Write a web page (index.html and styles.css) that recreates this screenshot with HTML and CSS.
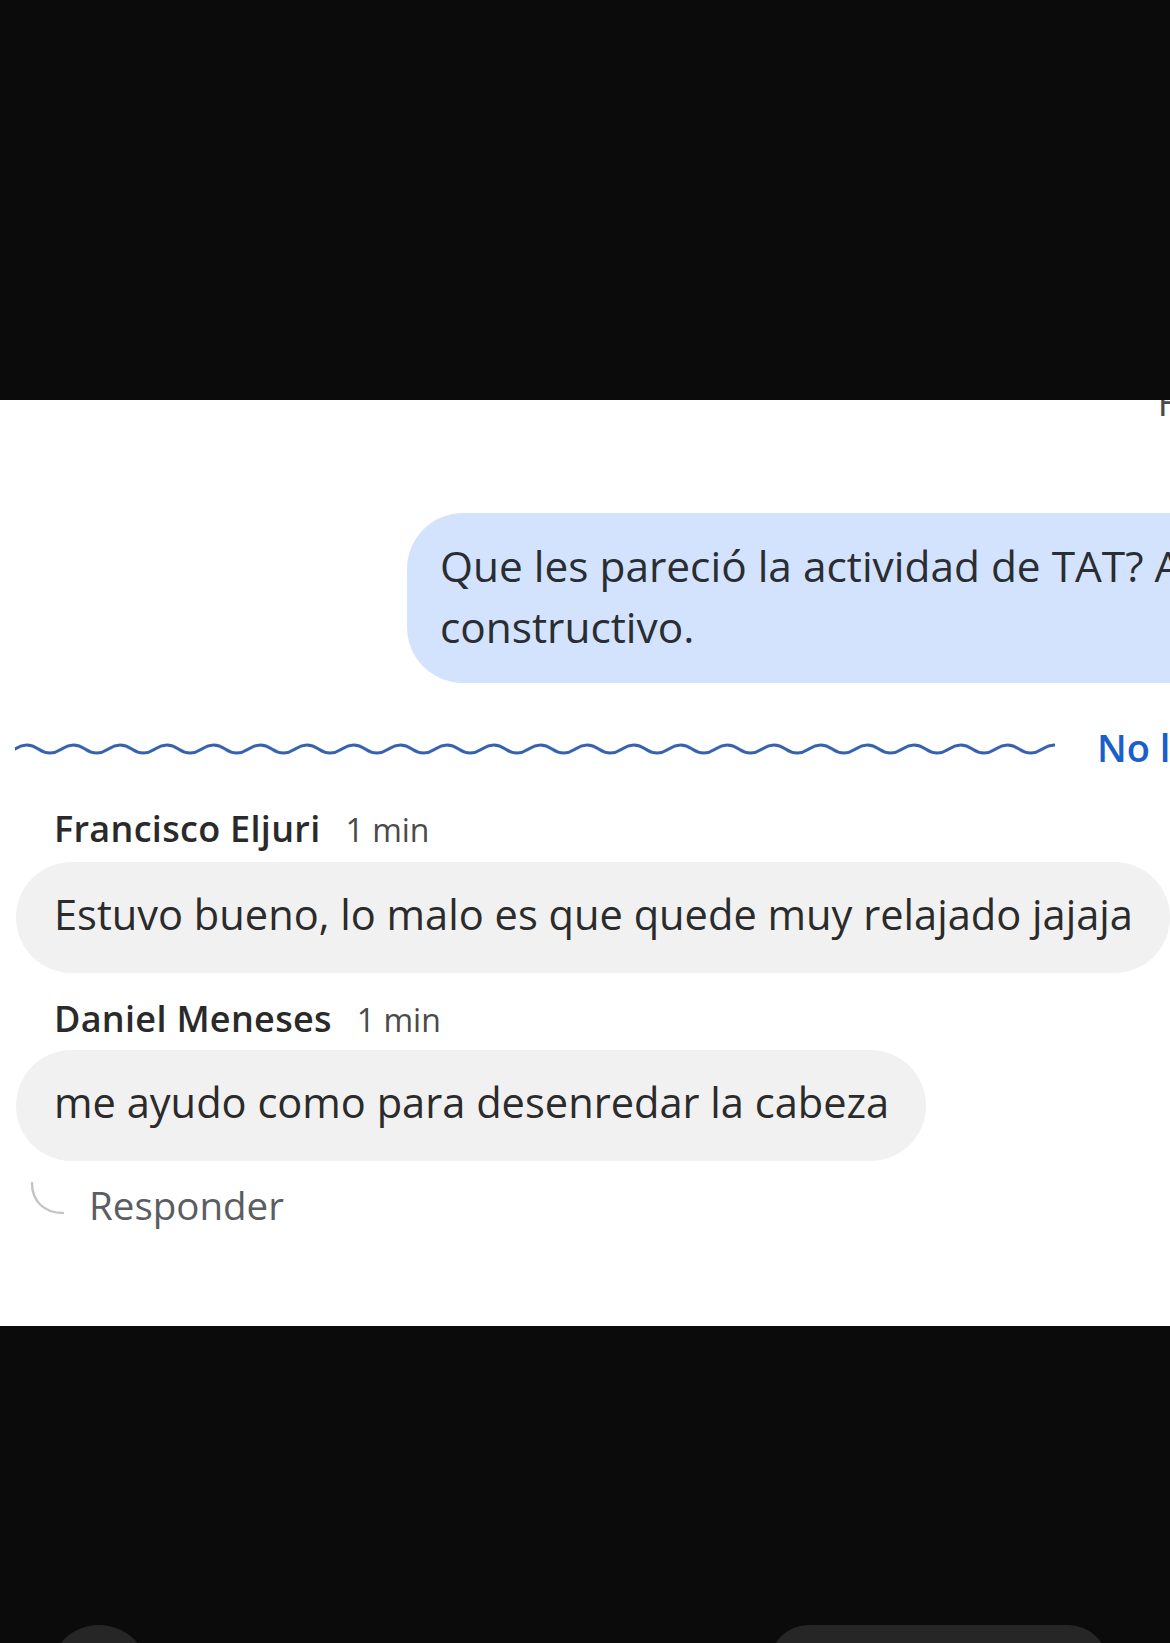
FILE: index.html
```html
<!DOCTYPE html>
<html lang="es">
<head>
    <meta charset="UTF-8" />
    <title>Chat - Respuestas</title>
    <link rel="stylesheet" href="styles.css">
</head>
<body>
    <div class="screen">
        <div class="letterbox"></div>

        <main class="panel">
            <div class="status"><span>F</span></div>

            <div class="outgoing">
                <div class="bubble bubble-out">
                    Que les pareció la actividad de TAT? Algún comentario<br>constructivo.
                </div>
            </div>

            <div class="unread">
                <svg class="wave" width="1040" height="14" viewBox="0 0 1040 14">
                    <defs>
                        <pattern id="wavePattern" width="46.7" height="14" patternUnits="userSpaceOnUse">
                            <path d="M-23.35 7 Q-11.675 15 0 7 Q11.675 -1 23.35 7 Q35.025 15 46.7 7 Q58.375 -1 70.05 7" fill="none" stroke="#3661ad" stroke-width="3" />
                        </pattern>
                    </defs>
                    <rect width="1040" height="14" fill="url(#wavePattern)" />
                </svg>
                <span>No leídos</span>
            </div>

            <div class="message">
                <div class="meta">
                    <span class="author">Francisco Eljuri</span>
                    <span class="time">1 min</span>
                </div>
                <div class="bubble bubble-in">Estuvo bueno, lo malo es que quede muy relajado jajaja</div>
            </div>

            <div class="message">
                <div class="meta">
                    <span class="author">Daniel Meneses</span>
                    <span class="time">1 min</span>
                </div>
                <div class="bubble bubble-in">me ayudo como para desenredar la cabeza</div>
            </div>

            <div class="reply">
                <svg width="36" height="34" viewBox="0 0 36 34">
                    <path d="M3 2 C3 20 15 32 34 32" fill="none" stroke="#c4c4c4" stroke-width="2.4" stroke-linecap="round" />
                </svg>
                <span>Responder</span>
            </div>
        </main>

        <div class="navbar">
            <div class="nav-circle"></div>
            <div class="nav-pill"></div>
        </div>
    </div>
</body>
</html>
```

FILE: styles.css
```css
* {
    box-sizing: border-box;
    margin: 0;
    padding: 0;
}

html, body {
    height: 100%;
    overflow: hidden;
}

body {
    font-family: "Open Sans", "Noto Sans", sans-serif;
    background-color: #0b0b0b;
    color: #2b2b2b;
}

.screen {
    width: 1170px;
    height: 1643px;
    display: flex;
    flex-direction: column;
}

.letterbox {
    height: 400px;
    flex-shrink: 0;
}

.panel {
    height: 926px;
    flex-shrink: 0;
    background-color: #ffffff;
    overflow: hidden;
}

.status {
    height: 16px;
    display: flex;
    justify-content: flex-end;
    align-items: flex-end;
    overflow: hidden;
}

.status span {
    font-size: 38px;
    line-height: 30px;
    color: #4a4a4a;
    margin-right: -7px;
}

.outgoing {
    margin-top: 97px;
    padding-left: 407px;
}

.bubble {
    font-size: 41.6px;
    white-space: nowrap;
}

.bubble-out {
    width: 900px;
    height: 170px;
    padding: 22px 0 26px 33px;
    font-size: 42.4px;
    line-height: 61px;
    background-color: #d3e3fd;
    border-radius: 56px 0 0 56px;
    color: #2a2d31;
}

.unread {
    margin-top: 42px;
    height: 44px;
    padding-left: 15px;
    display: flex;
    align-items: center;
    gap: 42px;
    white-space: nowrap;
}

.wave {
    flex-shrink: 0;
    margin-top: 4px;
}

.unread span {
    font-size: 38px;
    font-weight: 600;
    line-height: 44px;
    color: #1b5fcc;
}

.message {
    margin-top: 38px;
}

.message + .message {
    margin-top: 24px;
}

.meta {
    height: 44px;
    padding-left: 54px;
    display: flex;
    align-items: baseline;
    gap: 25px;
}

.author {
    font-size: 36px;
    font-weight: 600;
    letter-spacing: 0.3px;
    line-height: 44px;
    color: #2a2a2a;
}

.time {
    font-size: 32px;
    line-height: 44px;
    color: #4a4a4a;
}

.bubble-in {
    display: inline-block;
    margin: 11px 0 0 16px;
    padding: 28px 37px 34px 38px;
    line-height: 49px;
    background-color: #f1f1f1;
    border-radius: 56px;
    color: #2b2b2b;
}

.message + .message .bubble-in {
    margin-top: 9px;
}

.reply {
    margin-top: 22px;
    height: 44px;
    padding-left: 29px;
    display: flex;
    align-items: center;
    gap: 24px;
}

.reply svg {
    margin-top: -14px;
}

.reply span {
    font-size: 38.5px;
    line-height: 44px;
    color: #5a5d61;
}

.navbar {
    flex: 1;
    overflow: hidden;
    display: flex;
    align-items: flex-start;
    padding: 299px 62px 0 49px;
}

.nav-circle {
    width: 100px;
    height: 100px;
    border-radius: 50%;
    background-color: #262626;
    flex-shrink: 0;
}

.nav-pill {
    width: 339px;
    height: 100px;
    margin-left: auto;
    border-radius: 40px;
    background-color: #262626;
    flex-shrink: 0;
}
```
